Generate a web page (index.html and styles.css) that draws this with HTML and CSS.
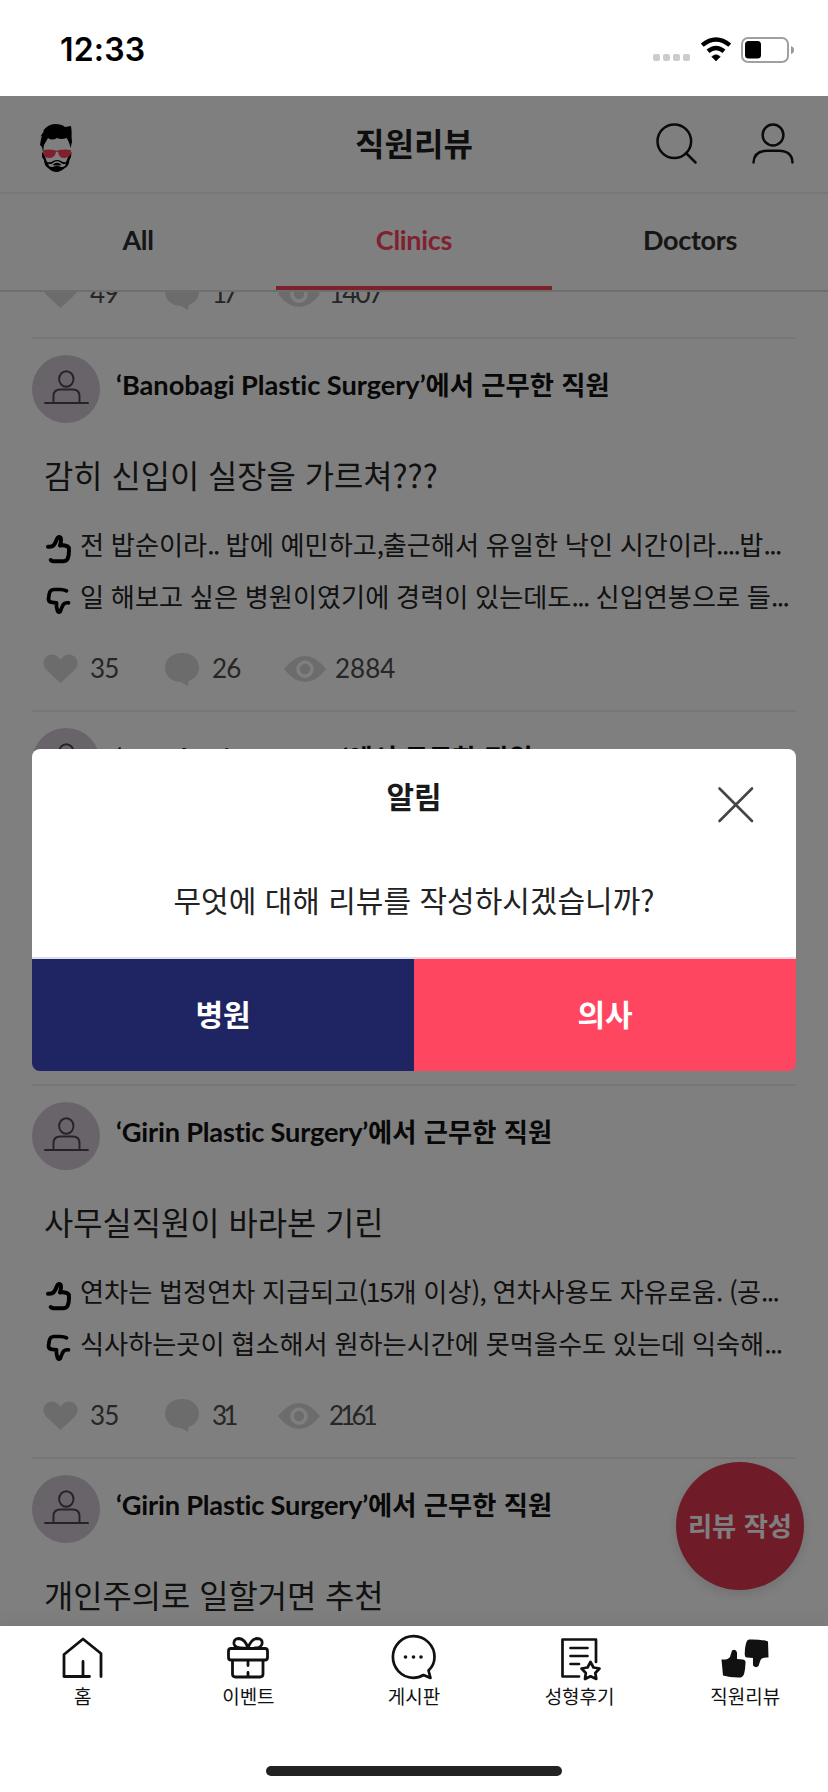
FILE: index.html
```html
<!DOCTYPE html>
<html lang="ko">
<head>
<meta charset="utf-8">
<title>직원리뷰</title>
<link rel="stylesheet" href="styles.css">
</head>
<body>
<svg class="defs" width="0" height="0">
  <symbol id="i-avatar" viewBox="0 0 68 68">
    <g fill="none" stroke="#4c4650" stroke-width="1.9" stroke-linecap="round">
      <ellipse cx="34.3" cy="24" rx="7.2" ry="7.8"/>
      <path d="M21.5 47.5V41q0-6.500 7-6.500h12q7 0 7 6.500v6.500M13 48h43"/>
    </g>
  </symbol>
  <symbol id="i-up" viewBox="0 0 26 30">
    <path d="M2 12.700Q6 13 7.500 11.500Q9.500 9 11 5Q12.500 2 14.500 3.500Q15.800 5 14 11.500Q20 10.500 22.800 13.500Q23.500 21 21.500 25Q20 27.300 17 27.300H9Q5.500 27.300 4.800 26" fill="none" stroke="#000" stroke-width="4" stroke-linecap="round" stroke-linejoin="round"/>
  </symbol>
  <symbol id="i-down" viewBox="0 0 26 30">
    <path d="M20.500 4.800Q18 3.500 14 3.500H8Q4 3.500 3.200 8L2.500 13Q2.500 16 6 16.300L10.500 16.800Q10 20 11.500 25Q12.500 27 14.200 25.500Q15.500 22 17 19Q18.500 16.500 22.500 16.800" fill="none" stroke="#000" stroke-width="3.700" stroke-linecap="round" stroke-linejoin="round"/>
  </symbol>
  <symbol id="i-heart" viewBox="0 0 35 30">
    <path d="M17.500 29L3.500 16Q0 12 .5 8Q1.500 1 9 .5Q14.500.5 17.500 6Q20.500.5 26 .5Q33.500 1 34.500 8Q35 12 31.500 16Z"/>
  </symbol>
  <symbol id="i-comment" viewBox="0 0 35 33">
    <path d="M17 0C27 0 34 6 34 14.500C34 21 30 26 23.500 28L23 33L16 29C7 29 0 23 0 14.500C0 6 7 0 17 0Z"/>
  </symbol>
  <symbol id="i-eye" viewBox="0 0 42 26">
    <path fill-rule="evenodd" d="M0 13Q10 0 21 0T42 13Q32 26 21 26T0 13ZM21 4.500a8.700 8.700 0 1 0 .01 0Z"/><circle cx="21" cy="13" r="5.200"/>
  </symbol>
</svg>

<div class="screen">
  <header class="status">
    <time class="clock">12:33</time>
    <div class="status-icons">
      <div class="signal"><i></i><i></i><i></i><i></i></div>
      <svg class="wifi" width="32" height="24" viewBox="0 0 32 24">
        <path d="M16 24l-4.300-4.300q4.300-4 8.600 0z" stroke="#000" stroke-linejoin="round" stroke-width=".5"/>
        <path d="M2.200 8.100q13.800-11.400 27.600 0M8 14.200q8-6.600 16 0" fill="none" stroke="#000" stroke-width="4.400"/>
      </svg>
      <svg class="battery" width="54" height="26" viewBox="0 0 54 26">
        <rect x="1" y="1" width="46" height="24" rx="6" fill="none" stroke="#a0a0a0" stroke-width="2"/>
        <rect x="4" y="4" width="16" height="17.500" rx="3.500"/>
        <path d="M50 9q3 1 3 4t-3 4z" fill="#999"/>
      </svg>
    </div>
  </header>

  <main class="app">
    <div class="topbar">
      <svg class="logo" width="32" height="48" viewBox="0 0 32 48">
        <path d="M0 21L1 15L2 12L.500 12.500L4 7L3 7Q8 0 15 0Q22 0 25 3L31 2Q32 9 31.500 12L32 18L30.500 24Q29 17 26.500 14Q21 16 17 14Q12 17 8 14L4 21L3 28L2 23Q0 21 0 21Z"/>
        <path d="M2 28L4 30L7 38Q11 39 13 37Q17 35 21 37Q24 39 26 38L29 31L31.500 28L31 33L29.500 36Q29 42 25 44Q20 48 16.500 48Q12 48 8 44Q4 41 4 36L2 33Z"/>
        <path d="M8 39.500Q11 41 13.500 38.500Q17 36 20.500 38.500Q23 41 26 39.500Q25 43.500 21.500 43Q17 41 12.500 43Q9 43.500 8 39.500Z" fill="#fff"/>
        <path d="M12.500 41Q17 36.500 21.500 41L19 41.500H15Z"/>
        <path d="M3 26Q9 25 14 26Q17 27.500 19 26Q25 25 31 26L30.500 31Q28 34 24 34Q19 34 18 28Q17 27.500 16 28Q15 34 9 34Q3 34 3 26Z" fill="#ff405a"/>
      </svg>
      <h1 class="page-title">직원리뷰</h1>
      <div class="actions">
        <svg width="42" height="42" viewBox="0 0 42 42"><g fill="none" stroke="#151515" stroke-width="2.500" stroke-linecap="round"><circle cx="18.300" cy="18.300" r="16.800"/><path d="M30 30L39.500 39.500"/></g></svg>
        <svg width="42" height="42" viewBox="0 0 42 42"><g fill="none" stroke="#151515" stroke-width="2.500" stroke-linecap="round"><circle cx="21" cy="12" r="10.400"/><path d="M1.500 39.500Q2 28 15 27.800H27Q40 28 40.500 39.500"/></g></svg>
      </div>
    </div>
    <nav class="tabs">
      <a class="tab">All</a>
      <a class="tab tab-active">Clinics</a>
      <a class="tab">Doctors</a>
    </nav>

    <div class="feed">
      <div class="posts">
        <article class="post">
          <div class="stats stats-first">
            <span class="stat like"><svg class="heart"><use href="#i-heart"/></svg><b>49</b></span>
            <span class="stat reply reply-narrow"><svg class="comment"><use href="#i-comment"/></svg><b class="slim">17</b></span>
            <span class="stat"><svg class="eye"><use href="#i-eye"/></svg><b class="semi">1407</b></span>
          </div>
        </article>
        <article class="post">
          <div class="author"><svg class="avatar"><use href="#i-avatar"/></svg><h2 class="name"><span class="latin">‘Banobagi Plastic Surgery’</span>에서 근무한 직원</h2></div>
          <h3 class="headline">감히 신입이 실장을 가르쳐???</h3>
          <p class="line"><svg class="thumb"><use href="#i-up"/></svg><span class="copy">전 밥순이라<span class="dots">..</span> 밥에 예민하고<span class="dots">,</span>출근해서 유일한 낙인 시간이라<span class="dots">....</span>밥<span class="dots">...</span></span></p>
          <p class="line"><svg class="thumb"><use href="#i-down"/></svg><span class="copy">일 해보고 싶은 병원이였기에 경력이 있는데도<span class="dots">...</span> 신입연봉으로 들<span class="dots">...</span></span></p>
          <div class="stats">
            <span class="stat like"><svg class="heart"><use href="#i-heart"/></svg><b>35</b></span>
            <span class="stat reply"><svg class="comment"><use href="#i-comment"/></svg><b>26</b></span>
            <span class="stat"><svg class="eye"><use href="#i-eye"/></svg><b class="wide">2884</b></span>
          </div>
        </article>
        <article class="post">
          <div class="author"><svg class="avatar"><use href="#i-avatar"/></svg><h2 class="name"><span class="latin">‘BA Plastic Surgery’</span>에서 근무한 직원</h2></div>
        </article>
        <article class="post">
          <div class="author"><svg class="avatar"><use href="#i-avatar"/></svg><h2 class="name"><span class="latin latin-tight">‘Girin Plastic Surgery’</span>에서 근무한 직원</h2></div>
          <h3 class="headline">사무실직원이 바라본 기린</h3>
          <p class="line"><svg class="thumb"><use href="#i-up"/></svg><span class="copy">연차는 법정연차 지급되고<span class="digits">(15</span>개 이상<span class="marks">),</span> 연차사용도 자유로움<span class="marks">.</span> <span class="marks">(</span>공<span class="dots">...</span></span></p>
          <p class="line"><svg class="thumb"><use href="#i-down"/></svg><span class="copy">식사하는곳이 협소해서 원하는시간에 못먹을수도 있는데 익숙해<span class="dots">...</span></span></p>
          <div class="stats">
            <span class="stat like"><svg class="heart"><use href="#i-heart"/></svg><b>35</b></span>
            <span class="stat reply reply-narrow"><svg class="comment"><use href="#i-comment"/></svg><b class="slim">31</b></span>
            <span class="stat"><svg class="eye"><use href="#i-eye"/></svg><b class="slim">2161</b></span>
          </div>
        </article>
        <article class="post">
          <div class="author"><svg class="avatar"><use href="#i-avatar"/></svg><h2 class="name"><span class="latin latin-tight">‘Girin Plastic Surgery’</span>에서 근무한 직원</h2></div>
          <h3 class="headline">개인주의로 일할거면 추천</h3>
        </article>
      </div>
    </div>
    <button class="fab">리뷰 작성</button>

    <div class="overlay">
      <section class="modal">
        <div class="modal-body">
          <h2 class="modal-title">알림</h2>
          <p class="modal-text">무엇에 대해 리뷰를 작성하시겠습니까?</p>
          <svg class="close" width="36" height="36" viewBox="0 0 36 36"><path d="M1.500 1.500L34 34M34 1.500L1.500 34" stroke="#454545" stroke-width="2.600" stroke-linecap="round"/></svg>
        </div>
        <div class="choices">
          <button class="choice clinic">병원</button>
          <button class="choice doctor">의사</button>
        </div>
      </section>
    </div>
  </main>

  <footer class="bottom">
    <nav class="menu">
      <a class="item"><svg width="48" height="44" viewBox="0 0 48 44"><path d="M30.500 40.500H5V18.500L24 3L42 17.500V40.500M24 25.500V40" fill="none" stroke="#111" stroke-width="2.800" stroke-linecap="round" stroke-linejoin="round"/></svg>홈</a>
      <a class="item"><svg width="48" height="44" viewBox="0 0 48 44"><g fill="none" stroke="#111" stroke-width="2.800" stroke-linecap="round" stroke-linejoin="round"><rect x="4.500" y="12.500" width="39" height="11.500" rx="2.500"/><path d="M8.500 24.500V38q0 3 3 3h24.500q3 0 3-3V24.500M24 24.500V29.500M24 36.500V40.500M24 12Q11 13 10 8Q9.500 2.500 15 2.500Q21 3 24 12Q27 3 33 2.500Q39 2.500 38 8Q37 12 31 12"/></g></svg>이벤트</a>
      <a class="item"><svg width="48" height="44" viewBox="0 0 48 44"><path d="M38.500 34.500L40.500 42L33.500 39Q29 41.800 23 41.800A20.800 20.800 0 1 1 44.500 21Q44.500 29 38.500 34.500Z" fill="none" stroke="#111" stroke-width="2.700" stroke-linejoin="round"/><g fill="#111"><circle cx="15.500" cy="21" r="1.800"/><circle cx="23.500" cy="21" r="1.800"/><circle cx="31" cy="21" r="1.800"/></g></svg>게시판</a>
      <a class="item"><svg width="48" height="44" viewBox="0 0 48 44"><g fill="none" stroke="#111" stroke-width="2.700" stroke-linecap="round" stroke-linejoin="round"><path d="M23 40.500H6.500V3.500H40V26M14.500 12H31.500M14.500 20H31.500M14.500 28H23"/><path d="M34.500 26L37.500 31.500L43.500 32.500L39.300 37L40.300 43L34.500 40.300L29 43L29.800 37L25.500 32.500L31.500 31.500Z"/></g></svg>성형후기</a>
      <a class="item"><svg width="48" height="44" viewBox="0 0 48 44"><g fill="#111"><path d="M.500 23.500Q7 24 9 21L11 14.500Q15 12.500 16 16.500V23L22 23.500Q25 24 24.500 27Q24 41 20 41.500Q10 42 2 39.500Z"/><path d="M47.500 21.500Q41 21 39.500 24L37.500 30Q35 32.500 32 29.500V22L26 21.500Q23.500 21 23.700 18Q24 4 28 3.500Q39 3 47 5.500Z"/></g></svg>직원리뷰</a>
    </nav>
    <div class="home-indicator"></div>
  </footer>
</div>
</body>
</html>
```

FILE: styles.css
```css
* { box-sizing: border-box; margin: 0; padding: 0; }
body { font-family: "Noto Sans CJK KR", "Noto Sans", sans-serif; color: #222; background: #fff; }
button { border: 0; font-family: inherit; }
.defs { position: absolute; }
svg { display: block; flex: none; overflow: visible; }
.screen { width: 828px; height: 1792px; display: flex; flex-direction: column; overflow: hidden; background: #fff; }

/* status bar */
.status { height: 96px; flex: none; display: flex; justify-content: space-between; padding: 37px 33px 0 60px; color: #000; }
.clock { font: 600 32px/26px Inter, sans-serif; letter-spacing: .2px; }
.status-icons { display: flex; align-items: flex-start; }
.signal { display: flex; gap: 3px; padding-top: 17px; margin-right: 10px; }
.signal i { width: 7px; height: 7px; border-radius: 2px; background: #ccc; }
.wifi { margin-right: 9px; }

/* app */
.app { position: relative; height: 1530px; flex: none; display: flex; flex-direction: column; overflow: hidden; }
.topbar { height: 98px; flex: none; display: grid; grid-template-columns: 1fr auto 1fr; align-items: center; padding: 0 34px 0 40px; border-bottom: 2px solid #eee; }
.logo { margin-top: 8px; }
.page-title { font-size: 32px; font-weight: 700; line-height: 44px; color: #1c1c1c; margin: 0 6px 5px 0; }
.actions { display: flex; gap: 54px; justify-content: flex-end; }
.tabs { height: 98px; flex: none; display: grid; grid-template-columns: repeat(3, 1fr); border-bottom: 2px solid #ddd; }
.tab { display: flex; justify-content: center; font: 700 27px/91px Lato, sans-serif; color: #2c2c2c; letter-spacing: -.3px; }
.tab-active { color: #ff4560; border-bottom: 4px solid #fa425a; }
.feed { flex: 1; min-height: 0; overflow: hidden; padding: 0 32px; }
.posts { margin-top: -328.300px; }
.post { height: 373.330px; border-top: 2px solid #ececec; padding-top: 16px; }
.author { display: flex; height: 68px; }
.avatar { width: 68px; height: 68px; border-radius: 50%; background: #d0c8d2; }
.name { margin-left: 16px; font-size: 26.300px; font-weight: 700; line-height: 58px; color: #111; white-space: nowrap; }
.latin { font-family: Lato, sans-serif; font-size: 27.200px; letter-spacing: -.04px; }
.latin-tight { letter-spacing: -.2px; }
.headline { margin: 27px 0 0 12px; font-size: 31.800px; font-weight: 400; line-height: 48px; color: #222; }
.line { display: flex; align-items: center; height: 52px; margin-left: 12px; font-size: 26.200px; color: #222; white-space: nowrap; word-spacing: -.6px; }
.headline + .line { margin-top: 21px; }
.copy { line-height: 44px; padding-bottom: 2px; }
.dots { letter-spacing: -1.500px; }
.marks { letter-spacing: -1px; }
.digits { letter-spacing: -1.300px; }
.thumb { width: 26px; height: 30px; margin: 8px 8px 0 2px; }
.stats { display: flex; align-items: center; height: 34px; margin: 29px 0 0 11px; fill: #d8d8d8; }
.stats-first { margin-top: 295px; }
.stat { display: flex; align-items: center; }
.stat b { font: 400 26px/32px Lato, sans-serif; color: #4c4c4c; letter-spacing: -.8px; padding-bottom: 2px; }
.stat .wide { letter-spacing: 0; }
.stat .slim { letter-spacing: -3.800px; }
.stat .semi { letter-spacing: -1.800px; }
.like { width: 122px; }
.reply { width: 119px; }
.reply-narrow { width: 113px; }
.heart { width: 35px; height: 30px; margin-right: 12px; }
.comment { width: 35px; height: 33px; margin-right: 12px; }
.eye { width: 42px; height: 26px; margin-right: 9px; }
.fab { position: absolute; left: 676px; top: 1366px; width: 128px; height: 128px; padding-bottom: 3px; border-radius: 50%; background: #e03650; color: #fff; font-size: 26.300px; font-weight: 700; box-shadow: 0 4px 12px rgba(0, 0, 0, .12); white-space: nowrap; }

/* dialog */
.overlay { position: absolute; inset: 0; padding: 653px 32px 0; background: rgba(0, 0, 0, .5); }
.modal { height: 322px; border-radius: 8px; overflow: hidden; }
.modal-body { position: relative; height: 208px; text-align: center; padding-top: 23px; background: #fff; }
.modal-title { font-size: 30px; line-height: 46px; font-weight: 700; color: #1a1a1a; }
.modal-text { margin-top: 58px; font-size: 30px; line-height: 46px; color: #222; }
.close { position: absolute; left: 686px; top: 38px; }
.choices { display: flex; height: 114px; }
.choice { flex: 1; color: #fff; font-size: 30px; font-weight: 700; border-top: 2px solid; padding-bottom: 4px; }
.clinic { background-color: #1f2463; border-color: #dcdded; }
.doctor { background-color: #ff4660; border-color: #f8d3da; }

/* bottom navigation */
.bottom { height: 166px; flex: none; display: flex; flex-direction: column; align-items: center; justify-content: space-between; padding: 10px 0 16px; background: #fff; box-shadow: 0 -4px 16px rgba(0, 0, 0, .06); position: relative; }
.menu { width: 100%; display: grid; grid-template-columns: repeat(5, 1fr); }
.item { display: flex; flex-direction: column; align-items: center; gap: 2px; font-size: 19px; line-height: 28px; color: #111; }
.home-indicator { width: 296px; height: 10px; border-radius: 5px; background: #222; }
```
